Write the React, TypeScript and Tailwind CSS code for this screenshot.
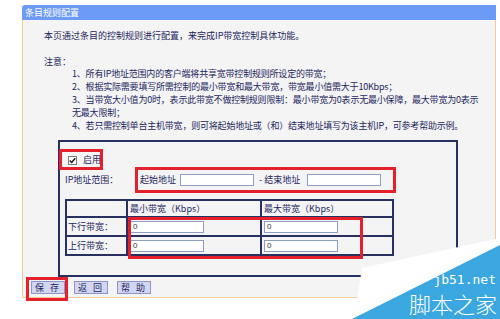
import React from "react";

const navy = "border-[#27305f]";

function Inp({ w, v }: { w: string; v?: string }) {
  return (
    <div
      className={`${w} h-[12px] bg-white border border-[#8d9dc6] text-[8px] leading-[10px] pl-[2px] text-[#333] font-['Liberation_Sans',sans-serif]`}
    >
      {v}
    </div>
  );
}

export default function App() {
  return (
    <div className="w-[500px] h-[319px] bg-white relative overflow-hidden font-['Noto_Sans_CJK_SC',sans-serif] text-[#1c2660]">
      <div className="ml-[22px] mt-[5px] w-[474px] flex flex-col">
        <div className="h-[15px] bg-[#6b9bf6] rounded-tl-[3px] text-white text-[9px] leading-[15px] pl-[3px]">
          条目规则配置
        </div>
        <div className="border-x border-b border-[#f6c995] bg-[#f4f4f4] flex flex-col">
          <div className="pl-[21px] pt-[9px] text-[9px] leading-[13px] whitespace-nowrap">
            <p>本页通过条目的控制规则进行配置，来完成IP带宽控制具体功能。</p>
            <p className="mt-[14px] leading-[11px]">注意：</p>
            <div className="pl-[28px] tracking-[-0.2px]">
              <p>1、所有IP地址范围内的客户端将共享宽带控制规则所设定的带宽；</p>
              <p>2、根据实际需要填写所需控制的最小带宽和最大带宽，带宽最小值需大于10Kbps；</p>
              <p>3、当带宽大小值为0时，表示此带宽不做控制规则限制：最小带宽为0表示无最小保障，最大带宽为0表示</p>
              <p>无最大限制；</p>
              <p>4、若只需控制单台主机带宽，则可将起始地址或（和）结束地址填写为该主机IP，可参考帮助示例。</p>
            </div>
          </div>
          <div className={`ml-[35px] mt-[8px] w-[400px] h-[137px] border-2 ${navy} flex flex-col text-[9px]`}>
            <div className="mt-[8px] h-[20px] flex items-center pl-[8px] gap-[6px]">
              <div className="w-[9px] h-[9px] bg-white border border-[#7a7a7a] flex items-center justify-center">
                <svg width="7" height="7" viewBox="0 0 7 7">
                  <path d="M0.8 3.6 L2.7 5.5 L6.2 1.2" stroke="#111" strokeWidth="1.4" fill="none" />
                </svg>
              </div>
              <span>启用</span>
            </div>
            <div className="h-[20px] flex items-center pl-[5px]">
              <span className="w-[75px]">IP地址范围：</span>
              <span className="w-[40px]">起始地址</span>
              <Inp w="w-[74px]" />
              <span className="ml-[5px] w-[48px]">- 结束地址</span>
              <Inp w="w-[74px]" />
            </div>
            <div className={`ml-[5px] mt-[9px] w-[329px] border-2 ${navy} grid grid-cols-[61px_134px_130px]`}>
              <div className={`h-[17px] border-r-2 border-b-2 ${navy}`} />
              <div className={`h-[17px] border-r-2 border-b-2 ${navy} flex items-center pl-[2px]`}>最小带宽（Kbps）</div>
              <div className={`h-[17px] border-b-2 ${navy} flex items-center pl-[2px]`}>最大带宽（Kbps）</div>
              <div className={`h-[19px] border-r-2 border-b-2 ${navy} flex items-center pl-[1px]`}>下行带宽：</div>
              <div className={`h-[19px] border-r-2 border-b-2 ${navy} flex items-center pl-[2px]`}>
                <Inp w="w-[74px]" v="0" />
              </div>
              <div className={`h-[19px] border-b-2 ${navy} flex items-center pl-[2px]`}>
                <Inp w="w-[74px]" v="0" />
              </div>
              <div className={`h-[17px] border-r-2 ${navy} flex items-center pl-[1px]`}>上行带宽：</div>
              <div className={`h-[17px] border-r-2 ${navy} flex items-center pl-[2px]`}>
                <Inp w="w-[74px]" v="0" />
              </div>
              <div className="h-[17px] flex items-center pl-[2px]">
                <Inp w="w-[74px]" v="0" />
              </div>
            </div>
          </div>
          <div className="h-[20px] flex items-center pl-[8px] gap-[9px]">
            {["保 存", "返 回", "帮 助"].map((t) => (
              <div
                key={t}
                className="w-[34px] h-[13px] bg-[#d3d6f3] border border-[#8e93c8] text-[9px] leading-[11px] text-center tracking-[2px] text-[#1c2660]"
              >
                {t}
              </div>
            ))}
          </div>
        </div>
      </div>

      {/* red annotation boxes */}
      <div className="absolute left-[59px] top-[149px] w-[44px] h-[21px] border-[3px] border-[#e3202b]" />
      <div className="absolute left-[135px] top-[167px] w-[261px] h-[26px] border-[3px] border-[#e3202b]" />
      <div className="absolute left-[128px] top-[217px] w-[235px] h-[42px] border-[3px] border-[#e3202b]" />
      <div className="absolute left-[26px] top-[277px] w-[42px] h-[24px] border-[3px] border-[#e3202b]" />

      {/* watermark */}
      <div className="absolute left-[330px] top-[230px] w-[170px] h-[89px]">
        <svg width="170" height="89" viewBox="0 0 170 89" className="absolute left-0 top-0">
          <polygon points="24,89 32,38 170,8 170,89" fill="#ffffff" />
          <polygon points="22,89 170,15 170,89" fill="#3aa7e0" />
        </svg>
        <div className="absolute right-[4px] top-[44px] text-white text-[13px] leading-[12px] font-['DejaVu_Sans_Mono',monospace]">
          jb51.net
        </div>
        <div className="absolute right-[3px] top-[62px] text-white text-[22px] leading-[22px] font-light">
          脚本之家
        </div>
      </div>
    </div>
  );
}
